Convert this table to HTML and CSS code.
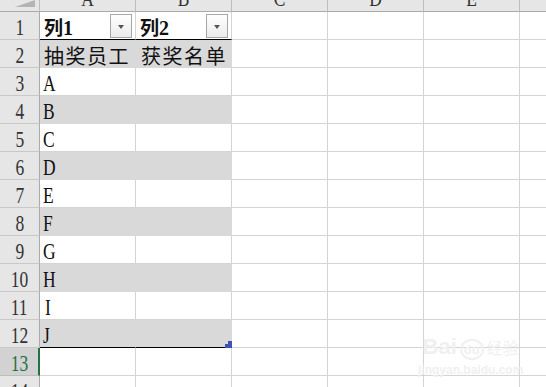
FILE: index.html
```html
<!DOCTYPE html>
<html>
<head>
    <title>抽奖名单</title>
    <link rel="stylesheet" href="styles.css">
</head>
<body>
    <div class="sheet">
        <div class="row col-head">
            <div class="corner">
                <svg width="40" height="11" viewBox="0 0 40 11"><polygon points="15,7 35,7 35,0" fill="#b4b4b4"/></svg>
            </div>
            <div class="ch"><span>A</span></div>
            <div class="ch"><span>B</span></div>
            <div class="ch"><span>C</span></div>
            <div class="ch"><span>D</span></div>
            <div class="ch"><span>E</span></div>
            <div class="ch last"></div>
        </div>

        <!-- table header row with filter buttons -->
        <div class="row">
            <div class="rh"><span>1</span></div>
            <div class="c th"><b><span class="zh">列</span>1</b><span class="filter"></span></div>
            <div class="c th"><b><span class="zh">列</span>2</b><span class="filter"></span></div>
            <div class="c"></div><div class="c"></div><div class="c"></div><div class="c last"></div>
        </div>
        <div class="row">
            <div class="rh"><span>2</span></div>
            <div class="c band"><span class="zh wide">抽奖员工</span></div>
            <div class="c band"><span class="zh wide">获奖名单</span></div>
            <div class="c"></div><div class="c"></div><div class="c"></div><div class="c last"></div>
        </div>
        <div class="row">
            <div class="rh"><span>3</span></div>
            <div class="c"><span class="t">A</span></div><div class="c"></div>
            <div class="c"></div><div class="c"></div><div class="c"></div><div class="c last"></div>
        </div>
        <div class="row">
            <div class="rh"><span>4</span></div>
            <div class="c band"><span class="t">B</span></div><div class="c band"></div>
            <div class="c"></div><div class="c"></div><div class="c"></div><div class="c last"></div>
        </div>
        <div class="row">
            <div class="rh"><span>5</span></div>
            <div class="c"><span class="t">C</span></div><div class="c"></div>
            <div class="c"></div><div class="c"></div><div class="c"></div><div class="c last"></div>
        </div>
        <div class="row">
            <div class="rh"><span>6</span></div>
            <div class="c band"><span class="t">D</span></div><div class="c band"></div>
            <div class="c"></div><div class="c"></div><div class="c"></div><div class="c last"></div>
        </div>
        <div class="row">
            <div class="rh"><span>7</span></div>
            <div class="c"><span class="t">E</span></div><div class="c"></div>
            <div class="c"></div><div class="c"></div><div class="c"></div><div class="c last"></div>
        </div>
        <div class="row">
            <div class="rh"><span>8</span></div>
            <div class="c band"><span class="t">F</span></div><div class="c band"></div>
            <div class="c"></div><div class="c"></div><div class="c"></div><div class="c last"></div>
        </div>
        <div class="row">
            <div class="rh"><span>9</span></div>
            <div class="c"><span class="t">G</span></div><div class="c"></div>
            <div class="c"></div><div class="c"></div><div class="c"></div><div class="c last"></div>
        </div>
        <div class="row">
            <div class="rh"><span>10</span></div>
            <div class="c band"><span class="t">H</span></div><div class="c band"></div>
            <div class="c"></div><div class="c"></div><div class="c"></div><div class="c last"></div>
        </div>
        <div class="row">
            <div class="rh"><span>11</span></div>
            <div class="c"><span class="t pad">I</span></div><div class="c"></div>
            <div class="c"></div><div class="c"></div><div class="c"></div><div class="c last"></div>
        </div>
        <div class="row">
            <div class="rh"><span>12</span></div>
            <div class="c band end"><span class="t">J</span></div>
            <div class="c band end">
                <svg class="resize" width="7" height="7" viewBox="0 0 7 7"><rect x="3" y="0" width="4" height="7" fill="#3f51b5"/><rect x="0" y="3" width="7" height="4" fill="#3f51b5"/></svg>
            </div>
            <div class="c"></div><div class="c"></div><div class="c"></div><div class="c last"></div>
        </div>
        <div class="row">
            <div class="rh active"><span>13</span></div>
            <div class="c"></div><div class="c"></div>
            <div class="c"></div><div class="c"></div><div class="c"></div><div class="c last"></div>
        </div>
        <div class="row">
            <div class="rh"><span>14</span></div>
            <div class="c"></div><div class="c"></div>
            <div class="c"></div><div class="c"></div><div class="c"></div><div class="c last"></div>
        </div>

        <div class="mark">
            <div class="mark-logo">Bai<span class="du">du</span><span class="zh">经验</span></div>
            <div class="mark-url">jingyan.baidu.com</div>
        </div>
    </div>
</body>
</html>
```

FILE: styles.css
```css
body {
    margin: 0;
    background: #fff;
    overflow: hidden;
}
.sheet {
    position: relative;
    width: 546px;
    height: 387px;
    overflow: hidden;
    font-family: "Liberation Serif", "Noto Sans CJK SC", serif;
    font-size: 23px;
    color: #111;
}
.row {
    display: grid;
    grid-template-columns: 40px repeat(5, 96px) 1fr;
    height: 28px;
}
.zh {
    font-family: "Noto Sans CJK SC", sans-serif;
    font-size: 19px;
}
.zh.wide {
    font-size: 20px;
    letter-spacing: 1.5px;
}
/* narrow tall latin, like the sheet's default font */
.t, .rh span, .ch span {
    display: inline-block;
    transform: scaleX(0.76);
    transform-origin: left;
}
.t.pad {
    margin-left: 2px;
}

/* column letters, mostly scrolled out of view */
.col-head {
    height: 12px;
    background: #e6e6e6;
}
.corner, .ch {
    box-sizing: border-box;
    height: 12px;
    border-bottom: 1px solid #ababab;
    border-right: 1px solid #bdbdbd;
    overflow: hidden;
}
.corner svg {
    display: block;
}
.ch {
    text-align: center;
    color: #333;
    line-height: 12px;
}
.ch span {
    display: block;
    margin-top: -7px;
    transform-origin: center;
}
.ch.last {
    border-right: none;
}

/* row numbers */
.rh {
    box-sizing: border-box;
    height: 28px;
    background: #e6e6e6;
    border-right: 1px solid #ababab;
    border-bottom: 1px solid #c8c8c8;
    text-align: center;
    color: #333;
    line-height: 20px;
    padding-top: 6px;
}
.rh span {
    transform-origin: center;
}
.rh.active {
    background: #d2d2d2;
    color: #217346;
    border-right: 2px solid #217346;
    border-bottom-color: #bdbdbd;
    padding-left: 1px;
}

/* cells */
.c {
    position: relative;
    box-sizing: border-box;
    height: 28px;
    border-right: 1px solid #d4d4d4;
    border-bottom: 1px solid #d4d4d4;
    line-height: 20px;
    padding: 6px 0 0 3px;
    white-space: nowrap;
}
.c.last {
    border-right: none;
}
.c.band {
    background: #d9d9d9;
    border-color: #d9d9d9;
}
.c.band .zh.wide {
    margin-left: 1px;
}
.c.band + .c.band .zh.wide {
    margin-left: 2px;
}
.c.th {
    display: flex;
    align-items: center;
    justify-content: space-between;
    padding: 0 3px 0 4px;
    border-bottom-color: #000;
}
.c.th b {
    font-weight: bold;
    font-size: 20px;
    padding-top: 3px;
}
.c.end {
    border-bottom-color: #000;
}
.filter {
    position: relative;
    box-sizing: border-box;
    width: 22px;
    height: 24px;
    border: 1px solid #a6a6a6;
    background: linear-gradient(#ffffff, #ebebeb);
}
.filter::after {
    content: "";
    position: absolute;
    left: 7px;
    top: 10px;
    border-left: 3.5px solid transparent;
    border-right: 3.5px solid transparent;
    border-top: 4px solid #555;
}
.resize {
    position: absolute;
    right: -1px;
    bottom: -1px;
}

/* faint site watermark */
.mark {
    position: absolute;
    left: 418px;
    top: 335px;
    color: #f0f0f0;
    font-family: "Liberation Sans", sans-serif;
    text-align: center;
}
.mark-logo {
    font-size: 22px;
    font-weight: bold;
    line-height: 24px;
}
.mark-logo .du {
    font-size: 13px;
    border: 2px solid #f0f0f0;
    border-radius: 50%;
    padding: 1px 2px;
    margin: 0 3px;
}
.mark-logo .zh {
    font-size: 16px;
    font-weight: normal;
}
.mark-url {
    font-size: 12px;
    font-weight: bold;
    line-height: 16px;
}
```
